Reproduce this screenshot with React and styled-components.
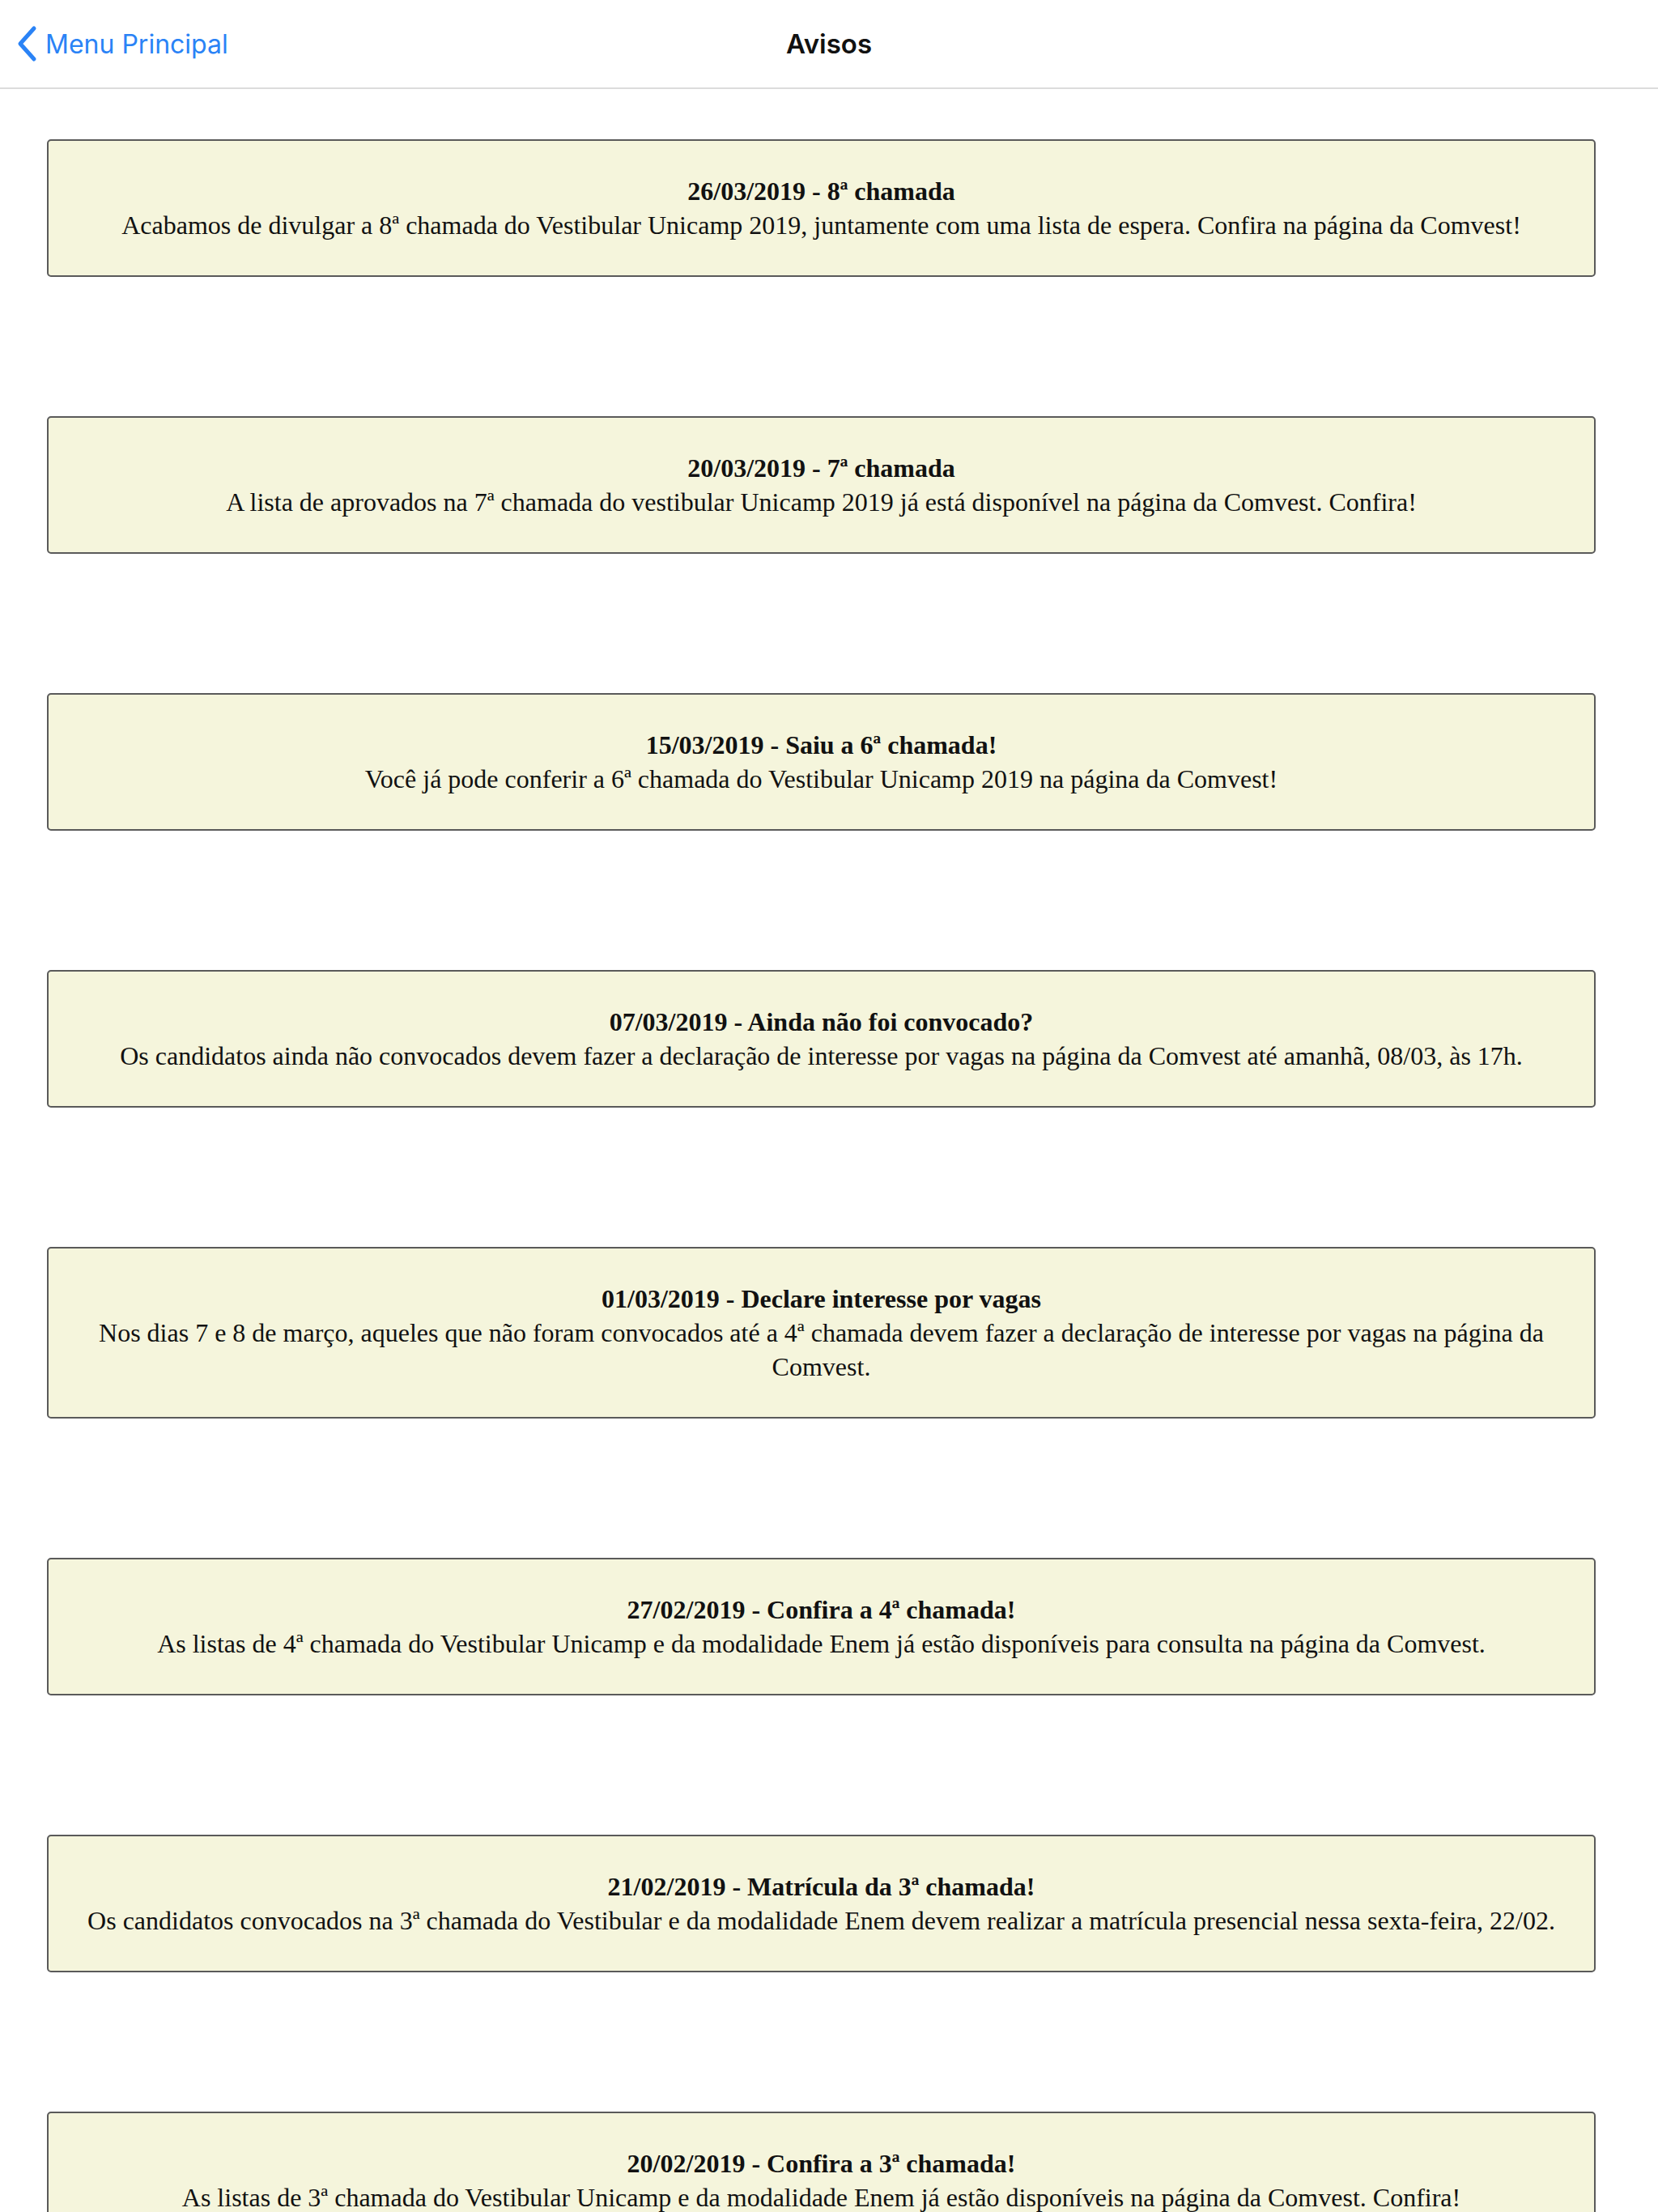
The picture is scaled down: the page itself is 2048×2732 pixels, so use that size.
import styled, { createGlobalStyle } from "styled-components";

const GlobalStyle = createGlobalStyle`
  body {
    margin: 0;
    background: #ffffff;
    font-family: "Liberation Serif", "Times New Roman", serif;
  }
`;

const Page = styled.div`
  display: flex;
  flex-direction: column;
`;

const NavBar = styled.div`
  height: 108px;
  border-bottom: 2px solid #dcdcdc;
  display: grid;
  grid-template-columns: 1fr auto 1fr;
  align-items: center;
  font-family: Inter, "Noto Sans", sans-serif;
`;

const BackButton = styled.div`
  display: flex;
  align-items: center;
  gap: 8px;
  padding-left: 20px;
  color: #2a83f6;
  font-size: 32px;
  svg {
    width: 28px;
    height: 46px;
  }
`;

const Title = styled.div`
  font-size: 33px;
  font-weight: 600;
  color: #111;
`;

const List = styled.div`
  display: flex;
  flex-direction: column;
  gap: 172px;
  padding: 62px 77px 0 58px;
`;

const Card = styled.div`
  background: #f5f5dc;
  border: 2px solid #5a5a5a;
  border-radius: 5px;
  padding: 41px 38px;
  text-align: center;
  font-size: 32px;
  line-height: 42px;
  color: #111;
`;

const CardTitle = styled.div`
  font-weight: bold;
`;

const CardText = styled.div``;

const avisos = [
  {
    title: "26/03/2019 - 8ª chamada",
    text: "Acabamos de divulgar a 8ª chamada do Vestibular Unicamp 2019, juntamente com uma lista de espera. Confira na página da Comvest!",
  },
  {
    title: "20/03/2019 - 7ª chamada",
    text: "A lista de aprovados na 7ª chamada do vestibular Unicamp 2019 já está disponível na página da Comvest. Confira!",
  },
  {
    title: "15/03/2019 - Saiu a 6ª chamada!",
    text: "Você já pode conferir a 6ª chamada do Vestibular Unicamp 2019 na página da Comvest!",
  },
  {
    title: "07/03/2019 - Ainda não foi convocado?",
    text: "Os candidatos ainda não convocados devem fazer a declaração de interesse por vagas na página da Comvest até amanhã, 08/03, às 17h.",
  },
  {
    title: "01/03/2019 - Declare interesse por vagas",
    text: "Nos dias 7 e 8 de março, aqueles que não foram convocados até a 4ª chamada devem fazer a declaração de interesse por vagas na página da Comvest.",
  },
  {
    title: "27/02/2019 - Confira a 4ª chamada!",
    text: "As listas de 4ª chamada do Vestibular Unicamp e da modalidade Enem já estão disponíveis para consulta na página da Comvest.",
  },
  {
    title: "21/02/2019 - Matrícula da 3ª chamada!",
    text: "Os candidatos convocados na 3ª chamada do Vestibular e da modalidade Enem devem realizar a matrícula presencial nessa sexta-feira, 22/02.",
  },
  {
    title: "20/02/2019 - Confira a 3ª chamada!",
    text: "As listas de 3ª chamada do Vestibular Unicamp e da modalidade Enem já estão disponíveis na página da Comvest. Confira!",
  },
];

export default function App() {
  return (
    <Page>
      <GlobalStyle />
      <NavBar>
        <BackButton>
          <svg viewBox="0 0 28 46" fill="none">
            <path
              d="M22 4 L5 23 L22 42"
              stroke="#2a83f6"
              strokeWidth="5"
              strokeLinecap="round"
              strokeLinejoin="round"
            />
          </svg>
          Menu Principal
        </BackButton>
        <Title>Avisos</Title>
        <div />
      </NavBar>
      <List>
        {avisos.map((a) => (
          <Card key={a.title}>
            <CardTitle>{a.title}</CardTitle>
            <CardText>{a.text}</CardText>
          </Card>
        ))}
      </List>
    </Page>
  );
}
